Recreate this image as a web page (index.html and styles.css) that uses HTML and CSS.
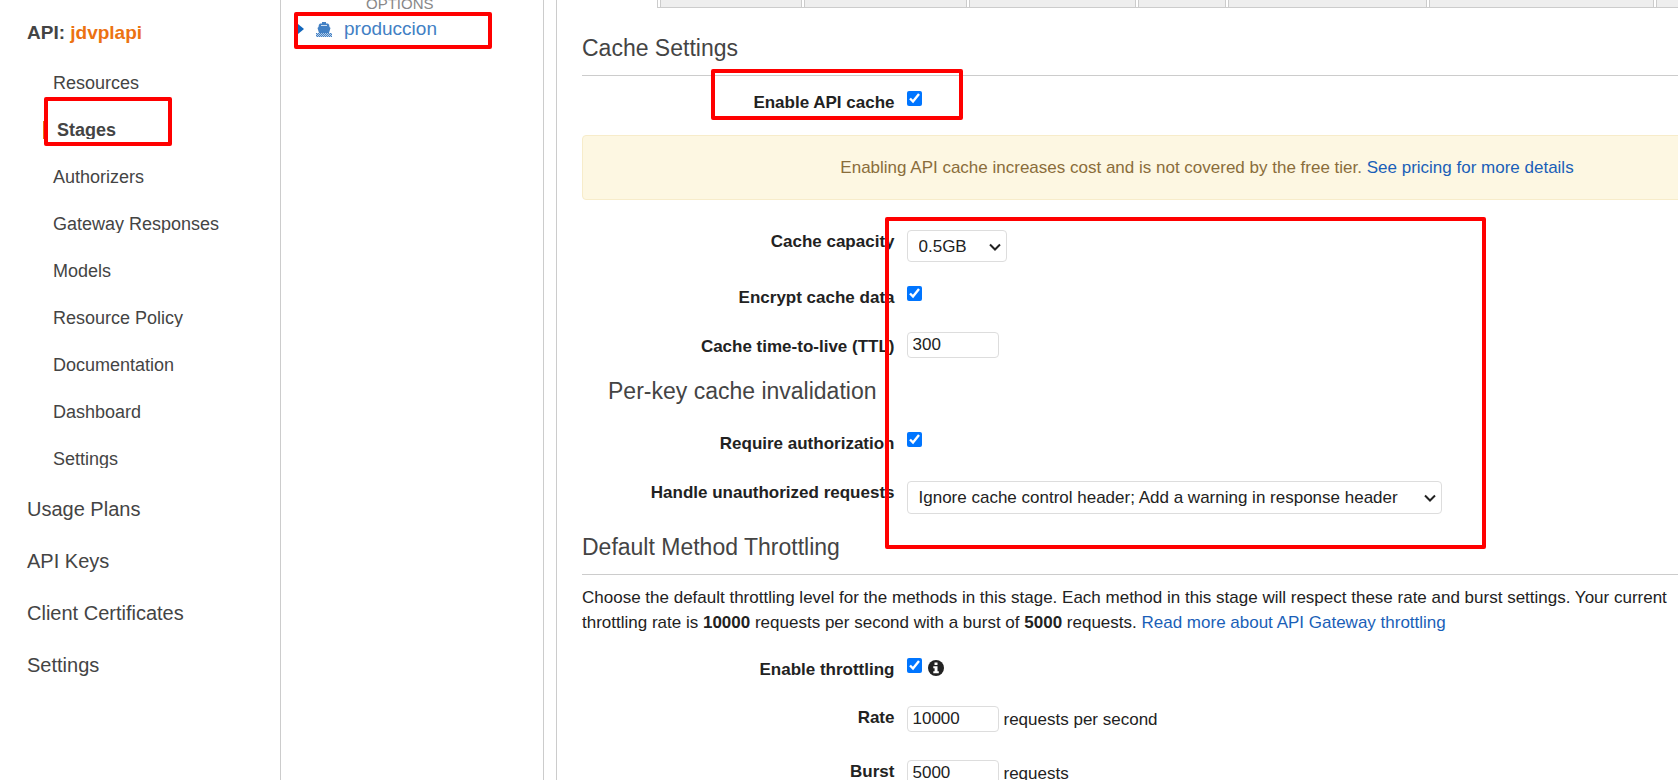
FILE: index.html
```html
<!DOCTYPE html>
<html lang="en">
<head>
<meta charset="utf-8">
<title>API Gateway - Stages</title>
<link rel="stylesheet" href="styles.css">
</head>
<body>
<div class="app">
  <nav class="sidebar">
    <div class="api-name">API: <a href="#">jdvplapi</a></div>
    <ul class="sub-nav">
      <li><a href="#">Resources</a></li>
      <li class="current"><a href="#">Stages</a></li>
      <li><a href="#">Authorizers</a></li>
      <li><a href="#">Gateway Responses</a></li>
      <li><a href="#">Models</a></li>
      <li><a href="#">Resource Policy</a></li>
      <li><a href="#">Documentation</a></li>
      <li><a href="#">Dashboard</a></li>
      <li><a href="#">Settings</a></li>
    </ul>
    <ul class="top-nav">
      <li><a href="#">Usage Plans</a></li>
      <li><a href="#">API Keys</a></li>
      <li><a href="#">Client Certificates</a></li>
      <li><a href="#">Settings</a></li>
    </ul>
  </nav>

  <section class="stages">
    <div class="stages-title">OPTIONS</div>
    <a class="stage" href="#">
      <svg class="caret" viewBox="0 0 6 10" aria-hidden="true"><path d="M0 0L6 5L0 10Z"/></svg>
      <svg class="ship" viewBox="0 0 16 15" aria-hidden="true">
        <path d="M6 0h4v1.500h2q1.500.5 1.500 3.500l1 1-1.500 5H3L1.500 6l1-1q0-3 1.500-3.500h2z"/>
        <path class="cabin" d="M5 3h6v1H5z"/>
        <path class="base" d="M0 11h16v4H0z"/>
        <path class="waves" d="M0 11.500h16M1 12.500h16M0 13.500h16M1 14.500h16"/>
      </svg>
      <span>produccion</span>
    </a>
  </section>

  <main class="editor">
    <div class="tabs">
      <span class="tab tab-1"></span><span class="tab tab-2"></span><span class="tab tab-3"></span><span class="tab tab-4"></span><span class="tab tab-5"></span><span class="tab tab-6"></span><span class="tab tab-7"></span>
    </div>
    <form class="settings">
      <h2 class="section-title">Cache Settings</h2>
      <div class="row row-first">
        <label for="cache">Enable API cache</label>
        <div class="control"><input type="checkbox" id="cache" checked></div>
      </div>
      <div class="alert">Enabling API cache increases cost and is not covered by the free tier. <a href="#">See pricing for more details</a></div>
      <div class="row row-capacity">
        <label for="capacity">Cache capacity</label>
        <div class="control"><span class="dropdown dropdown-short"><select id="capacity"><option>0.5GB</option></select><svg class="chevron" viewBox="0 0 12 8" aria-hidden="true"><path d="M1 1.500l5 5 5-5"/></svg></span></div>
      </div>
      <div class="row">
        <label for="encrypt">Encrypt cache data</label>
        <div class="control"><input type="checkbox" id="encrypt" checked></div>
      </div>
      <div class="row row-ttl">
        <label for="ttl">Cache time-to-live (TTL)</label>
        <div class="control"><input type="text" id="ttl" value="300"></div>
      </div>
      <h3 class="sub-title">Per-key cache invalidation</h3>
      <div class="row row-auth">
        <label for="auth">Require authorization</label>
        <div class="control"><input type="checkbox" id="auth" checked></div>
      </div>
      <div class="row row-unauth">
        <label for="unauth">Handle unauthorized requests</label>
        <div class="control"><span class="dropdown dropdown-long"><select id="unauth"><option>Ignore cache control header; Add a warning in response header</option></select><svg class="chevron" viewBox="0 0 12 8" aria-hidden="true"><path d="M1 1.500l5 5 5-5"/></svg></span></div>
      </div>
      <h2 class="section-title section-next">Default Method Throttling</h2>
      <p class="intro">Choose the default throttling level for the methods in this stage. Each method in this stage will respect these rate and burst settings. Your current<br>throttling rate is <b>10000</b> requests per second with a burst of <b>5000</b> requests. <a href="#">Read more about API Gateway throttling</a></p>
      <div class="row row-throttle">
        <label for="throttle">Enable throttling</label>
        <div class="control control-info"><input type="checkbox" id="throttle" checked>
          <svg class="info" viewBox="0 0 16 16" aria-hidden="true"><circle cx="8" cy="8" r="8"/><path d="M6.500 2.500h3v2.500h-3zM5.300 6.300h4.200v5h1.300v2H5.300v-2h1.300V8.300H5.300z"/></svg>
        </div>
      </div>
      <div class="row">
        <label for="rate">Rate</label>
        <div class="control"><input type="text" id="rate" value="10000"><span>requests per second</span></div>
      </div>
      <div class="row row-burst">
        <label for="burst">Burst</label>
        <div class="control"><input type="text" id="burst" value="5000"><span>requests</span></div>
      </div>
    </form>
  </main>

  <div class="mark mark-nav"></div>
  <div class="mark mark-stage"></div>
  <div class="mark mark-cache"></div>
  <div class="mark mark-fields"></div>
</div>
</body>
</html>
```

FILE: styles.css
```css
* { box-sizing: border-box; }

body {
  margin: 0;
  overflow: hidden;
  background: #fff;
  color: #222;
  font-family: "Liberation Sans", Arial, sans-serif;
  font-size: 17px;
  line-height: 25px;
}

a { color: #1a5fb8; text-decoration: none; }
ul { list-style: none; margin: 0; padding: 0; }

.app {
  position: relative;
  display: flex;
  height: 100vh;
  overflow: hidden;
}

/* Left navigation */
.sidebar {
  flex: 0 0 280px;
  padding: 21px 0 0 27px;
  color: #444;
}
.sidebar li a { color: #444; }
.api-name { font-size: 19px; font-weight: bold; line-height: 24px; }
.api-name a { color: #ec7211; }
.sub-nav {
  display: flex;
  flex-direction: column;
  gap: 29px;
  padding: 29px 0 0 16px;
  font-size: 18px;
  line-height: 18px;
}
.sub-nav li { padding-left: 10px; overflow: hidden; }
.sub-nav .current { border-left: 4px solid #ec7211; font-weight: bold; }
.top-nav {
  display: flex;
  flex-direction: column;
  gap: 28px;
  padding-top: 29px;
  font-size: 20px;
  line-height: 24px;
}

/* Stage list */
.stages {
  flex: 0 0 264px;
  border: solid #ccc;
  border-width: 0 1px;
}
.stages-title {
  padding-left: 85px;
  color: #888;
  font-size: 15px;
  line-height: 16px;
  margin-top: -4px;
}
.stage {
  display: flex;
  align-items: center;
  padding: 5px 0 0 17px;
  color: #4280c4;
  font-size: 19px;
  line-height: 24px;
}
.caret { width: 6px; height: 10px; margin-right: 12px; fill: #1166bb; }
.ship { width: 16px; height: 15px; margin-right: 12px; fill: #4280c4; }
.ship .cabin { fill: #cfe0f2; }
.ship .base { fill: #b4cde8; }
.ship .waves { stroke: #4280c4; stroke-width: 1; stroke-dasharray: 1 1; }

/* Stage editor */
.editor {
  flex: 1 0 1276px;
  margin-left: 12px;
  border-left: 1px solid #ccc;
}
.tabs {
  display: flex;
  gap: 2px;
  height: 8px;
  margin-left: 100px;
  padding-left: 2px;
  border: solid #ccc;
  border-width: 0 0 1px 1px;
}
.tab { background: #eee; border: solid #ccc; border-width: 0 1px; }
.tab-1 { width: 142px; }
.tab-2 { width: 163px; }
.tab-3 { width: 167px; }
.tab-4 { width: 88px; }
.tab-5 { width: 199px; }
.tab-6 { width: 225px; }
.tab-7 { flex: 1; }

.settings { padding: 24px 0 0 25px; }
.section-title, .sub-title {
  margin: 0;
  color: #444;
  font-size: 23px;
  font-weight: normal;
  line-height: 32px;
}
.section-title { padding-bottom: 11px; border-bottom: 1px solid #ccc; }
.section-next { margin-top: 17px; }
.sub-title { margin-top: 16px; padding-left: 26px; }

.row {
  display: grid;
  grid-template-columns: 25% 1fr;
  column-gap: 12px;
  align-items: start;
  margin-top: 24px;
}
.row-first { margin-top: 15px; }
.row-capacity { margin-top: 30px; }
.row-auth { margin-top: 25px; }
.row-unauth { margin-top: 25px; }
.row-throttle { margin-top: 23px; }
.row-burst { margin-top: 28px; }
.row-ttl { margin-top: 22px; }
.row-ttl label { padding-top: 3px; }
label { font-weight: bold; line-height: 24px; text-align: right; }
.control { display: flex; align-items: center; gap: 5px; }
.control-info { align-items: flex-start; gap: 6px; }

input, select {
  margin: 0;
  border: 1px solid #ddd;
  border-radius: 4px;
  background: #fff;
  color: #222;
  font-family: inherit;
  font-size: 17px;
}
input[type="checkbox"] { width: 15px; height: 15px; }
input[type="text"] { width: 92px; height: 26px; padding: 0 5px; }

.dropdown { position: relative; display: flex; }
.dropdown-short { width: 100px; height: 32px; }
.dropdown-long { width: 535px; height: 33px; }
.dropdown select { appearance: none; width: 100%; padding: 0 0 0 11px; }
.chevron {
  position: absolute;
  right: 6px;
  top: 13px;
  width: 12px;
  height: 8px;
  fill: none;
  stroke: #222;
  stroke-width: 2;
  pointer-events: none;
}

.info { width: 16px; height: 16px; margin-top: 2px; fill: #222; }
.info path { fill: #fff; }

.alert {
  margin-top: 20px;
  padding: 19px;
  border: 1px solid #f7ecca;
  border-radius: 4px;
  background: #fdf7e2;
  color: #8a6d3b;
  text-align: center;
}
.intro { margin: 10px 0 0; white-space: nowrap; }

/* Highlight frames laid over the page */
.mark {
  position: absolute;
  border: 4px solid #f00;
  border-radius: 2px;
  pointer-events: none;
}
.mark-nav { left: 44px; top: 97px; width: 128px; height: 49px; }
.mark-stage { left: 294px; top: 12px; width: 198px; height: 37px; }
.mark-cache { left: 711px; top: 69px; width: 252px; height: 51px; }
.mark-fields { left: 885px; top: 217px; width: 601px; height: 332px; }
```
